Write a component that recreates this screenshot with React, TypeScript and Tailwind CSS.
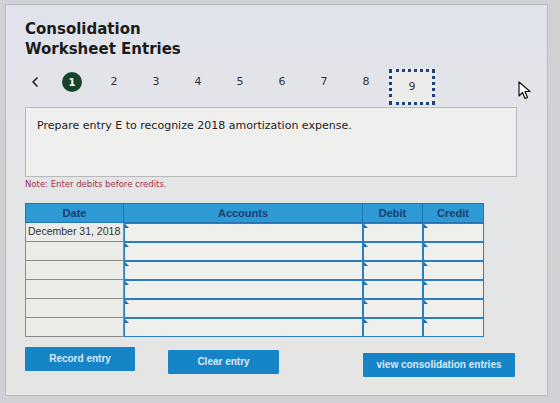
import { ChevronLeft } from 'lucide-react';

const pages = [1, 2, 3, 4, 5, 6, 7, 8];
const rows = ['December 31, 2018', '', '', '', '', ''];

function Marker() {
  return <span className="absolute left-0 top-0 h-0 w-0 border-l-[4px] border-t-[4px] border-l-[#1f6fb3] border-t-transparent" />;
}

function InputCell({ w }: { w: string }) {
  return (
    <div className={`relative ${w} h-full border-[1.5px] border-[#2a7dc0] bg-[#efefec]`}>
      <Marker />
    </div>
  );
}

export default function App() {
  return (
    <div className="h-[403px] w-[560px] overflow-hidden bg-[#cfd1d4]">
      <div className="relative ml-[5px] mt-[4px] h-[392px] w-[543px] border border-[#b9bcc2] bg-[linear-gradient(180deg,#e1e3ec_0%,#e4e5e8_40%,#e5e5e3_100%)] pl-[19px] pt-[14px] font-['DejaVu_Sans',sans-serif]">
        <h1 className="text-[15px] font-bold leading-[20px] text-[#1b1b1b]">
          Consolidation
          <br />
          Worksheet Entries
        </h1>

        <div className="mt-[5px] flex h-[36px] items-center text-[11px] text-[#333]">
          <ChevronLeft className="ml-[2px] h-[16px] w-[16px] text-[#222]" strokeWidth={2.5} />
          <div className="ml-[8px] flex items-center">
            {pages.map((p) => (
              <div key={p} className="flex h-[20px] w-[42px] items-center justify-center">
                {p === 1 ? (
                  <span className="flex h-[20px] w-[20px] items-center justify-center rounded-full bg-[#17432a] text-[10px] font-bold text-white">
                    1
                  </span>
                ) : (
                  <span>{p}</span>
                )}
              </div>
            ))}
          </div>
          <div className="ml-[2px] mt-[10px] flex h-[36px] w-[46px] items-center justify-center border-[3px] border-dotted border-[#20407a] bg-[#ececea]">
            9
          </div>
        </div>

        <svg className="absolute left-[512px] top-[76px]" width="14" height="20" viewBox="0 0 14 20">
          <path d="M1 1 L1 15 L4.5 11.5 L7 17.5 L9.5 16.5 L7 10.5 L12 10.5 Z" fill="#fff" stroke="#111" strokeWidth="1.2" strokeLinejoin="round" />
        </svg>

        <div className="mt-[7px] h-[70px] w-[492px] border border-[#b8b8b8] bg-[#efefed] px-[11px] pt-[10px] text-[11px] text-[#222]">
          Prepare entry E to recognize 2018 amortization expense.
        </div>

        <p className="mt-[1px] text-[8.5px] text-[#a0344c]">Note: Enter debits before credits.</p>

        <div className="mt-[12px] w-[459px] font-['Liberation_Sans',sans-serif] text-[11px]">
          <div className="flex h-[20px] bg-[#2d9ad6] font-bold text-[#1c3d6b]">
            <div className="flex w-[99px] items-center justify-center border border-[#2274b4]">Date</div>
            <div className="flex w-[239px] items-center justify-center border-y border-r border-[#2274b4]">Accounts</div>
            <div className="flex w-[60px] items-center justify-center border-y border-r border-[#2274b4]">Debit</div>
            <div className="flex w-[61px] items-center justify-center border-y border-r border-[#2274b4]">Credit</div>
          </div>
          {rows.map((d, i) => (
            <div key={i} className="flex h-[19px]">
              <div className="flex w-[99px] items-center whitespace-nowrap border-x border-b border-[#8c8c8c] bg-[#ebebe8] pl-[2px] text-[10.5px] text-[#333]">
                {d}
              </div>
              <InputCell w="w-[239px]" />
              <InputCell w="w-[60px]" />
              <InputCell w="w-[61px]" />
            </div>
          ))}
        </div>

        <div className="mt-[10px] flex font-['Liberation_Sans',sans-serif] text-[10px] font-bold text-[#dce9f5]">
          <button className="h-[24px] w-[110px] rounded-[1px] bg-[#1585c8]">Record entry</button>
          <button className="ml-[33px] mt-[3px] h-[24px] w-[111px] rounded-[1px] bg-[#1585c8]">Clear entry</button>
          <button className="ml-[84px] mt-[6px] h-[24px] w-[152px] rounded-[1px] bg-[#1585c8]">view consolidation entries</button>
        </div>
      </div>
    </div>
  );
}
